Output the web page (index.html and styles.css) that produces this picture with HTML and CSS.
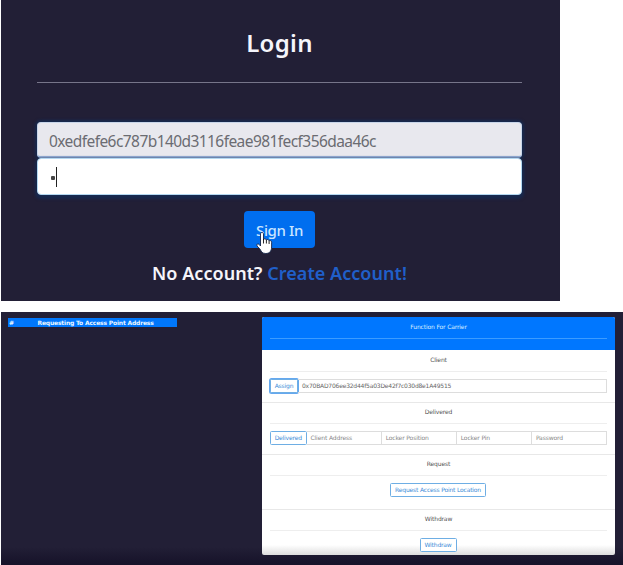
FILE: index.html
```html
<!DOCTYPE html>
<html lang="en">
<head>
<meta charset="utf-8">
<title>Login and Carrier</title>
<link rel="stylesheet" href="styles.css">
</head>
<body>
<section class="login">
  <h1 class="login-title">Login</h1>
  <hr class="login-rule">
  <div class="field field-filled"><span class="address">0xedfefe6c787b140d3116feae981fecf356daa46c</span></div>
  <div class="field field-active"><span class="dot"></span><span class="caret"></span></div>
  <button class="sign-in"><span>Sign In</span>
    <svg class="pointer" width="17" height="24" viewBox="0 0 17 24"><path d="M4.500 3C4.500 1 7.500 1 7.500 3V8.500C8 7.500 10.200 7.600 10.400 9c.6-.9 2.500-.6 2.700.8.8-.7 2.500-.1 2.500 1.400V16c0 4.500-2.300 6.500-5.800 6.500-3.500 0-4.500-1.800-5.500-4L1 15c-.9-2 1.200-2.800 2.300-1.400l1.200 1.400z" fill="#fff" stroke="#132447" stroke-width=".9"/><path d="M7.500 8v4.500M10.400 9v3.500M13.100 10v3" stroke="#111" stroke-width=".9" fill="none"/></svg>
  </button>
  <p class="signup">No Account? <a>Create Account!</a></p>
</section>
<section class="dashboard">
  <div class="table-head"><span class="col-num">#</span><span class="col-address">Requesting To Access Point Address</span></div>
  <div class="card">
    <header class="card-head">Function For Carrier<hr></header>
    <div class="block client">
      <h2>Client</h2><hr>
      <div class="group"><button class="btn focused">Assign</button><div class="input value">0x70BAD706ee32d44f5a03De42f7c030d8e1A49515</div></div>
    </div>
    <div class="block delivered">
      <h2>Delivered</h2><hr>
      <div class="group"><button class="btn">Delivered</button><div class="input">Client Address</div><div class="input">Locker Position</div><div class="input">Locker Pin</div><div class="input">Password</div></div>
    </div>
    <div class="block request">
      <h2>Request</h2><hr>
      <button class="btn wide">Request Access Point Location</button>
    </div>
    <div class="block withdraw">
      <h2>Withdraw</h2><hr>
      <button class="btn small">Withdraw</button>
    </div>
  </div>
</section>
</body>
</html>
```
FILE: styles.css
```css
* { box-sizing: border-box; }
body { margin: 0; background: #fff; height: 565px; overflow: hidden; }
h1, h2, p, hr { margin: 0; }
hr { border: 0; height: 1px; }
button { margin: 0; padding: 0; font: inherit; }

.login {
  width: 559px; height: 301px; margin: 0 0 11px 1px; padding: 25px 38px 0 36px;
  background: #221f36; color: #f5f5fb;
  font-family: "Noto Sans", sans-serif;
  display: flex; flex-direction: column; align-items: center;
}
.login-title { font-size: 24px; line-height: 36px; font-weight: 600; letter-spacing: 0.3px; }
.login-rule { width: 100%; background: #77758a; margin: 21px 0 39px; }
.field {
  width: 485px; height: 36px; border-radius: 4px; padding-left: 12px;
  display: flex; align-items: center; flex: none;
  box-shadow: 0 0 3px 2px #17294f;
}
.field-filled { background: #e8e8ee; color: #6b6c72; border: 1px solid #c8d5e9; border-bottom: 2px solid #9eb9e1; padding-left: 11px; }
.field-active { background: #fff; border: 1px solid #b4d8f1; height: 37px; position: relative; box-shadow: 0 2px 3px 2px #17294f; }
.address { font-size: 15.5px; letter-spacing: -0.57px; line-height: 24px; white-space: nowrap; padding-top: 3px; }
.dot { width: 4px; height: 4px; background: #454545; border-radius: 1px; margin-left: 1px; margin-top: 2px; }
.caret { width: 1px; height: 20px; background: #222; margin-left: 1px; margin-top: 1px; }
.sign-in {
  position: relative; flex: none; width: 71px; height: 37px; margin-top: 16px;
  background: #006eef; border: 0; border-radius: 4px; color: #c9e5ff;
  font-size: 15px; font-weight: 500; letter-spacing: -0.4px;
}
.pointer { position: absolute; left: 12px; top: 20px; }
.signup { font-size: 18px; line-height: 26px; font-weight: 600; margin-top: 12px; white-space: nowrap; letter-spacing: 0.05px; }
.signup a { color: #205fc9; }

.dashboard {
  width: 622px; height: 253px; margin-left: 1px; padding: 5px 8.5px 0 7px;
  background: linear-gradient(#221f36 235px, #17132a 251px);
  display: flex; justify-content: space-between; align-items: flex-start;
  font-family: "DejaVu Sans", sans-serif; font-size: 6px; letter-spacing: -0.14px; color: #555;
}
.table-head {
  width: 169px; height: 9px; margin-top: 1px; background: #0077fb; color: #e9f6ff;
  font-weight: bold; line-height: 9px; letter-spacing: -0.18px; display: flex; white-space: nowrap;
}
.col-num { width: 29.5px; padding-left: 1px; }
.card { width: 352.5px; height: 238px; border-radius: 2px; overflow: hidden; background: linear-gradient(#fff 228px, #ddd 238px); text-align: center; }
.card-head { height: 33px; padding: 5px 7.5px 0 8px; background: #0077ff; color: #d7eeff; line-height: 9px; }
.card-head hr { margin-top: 7px; background: #3c9cff; }
.block { padding: 5px 7.5px 0 8px; border-bottom: 1px solid #e8e8e8; }
.block h2 { font-size: 6px; font-weight: normal; line-height: 9px; }
.block hr { background: #eee; margin: 7px 0; }
.client { height: 53px; }
.delivered { height: 52px; padding-top: 4px; }
.request { height: 55px; padding-top: 4px; }
.withdraw { height: 45px; border: 0; padding-top: 4px; }
.group { display: flex; height: 14px; }
.btn {
  height: 14px; width: 36.5px; background: #fff; color: #3d8cd8; border: 1px solid #6eaee4;
  border-radius: 1.5px; line-height: 12px; flex: none; white-space: nowrap; display: inline-block; vertical-align: top;
  letter-spacing: -0.17px;
}
.btn.focused { width: 28px; box-shadow: 0 0 0 1px #65a8ef; }
.btn.wide { width: 96px; margin-right: 1px; }
.btn.small { width: 37px; margin-right: 1px; }
.input { flex: 1; border: 1px solid #ddd; border-left: 0; text-align: left; line-height: 12px; padding-left: 4px; color: #888; letter-spacing: -0.12px; }
.input.value { color: #666; letter-spacing: -0.21px; }
```
